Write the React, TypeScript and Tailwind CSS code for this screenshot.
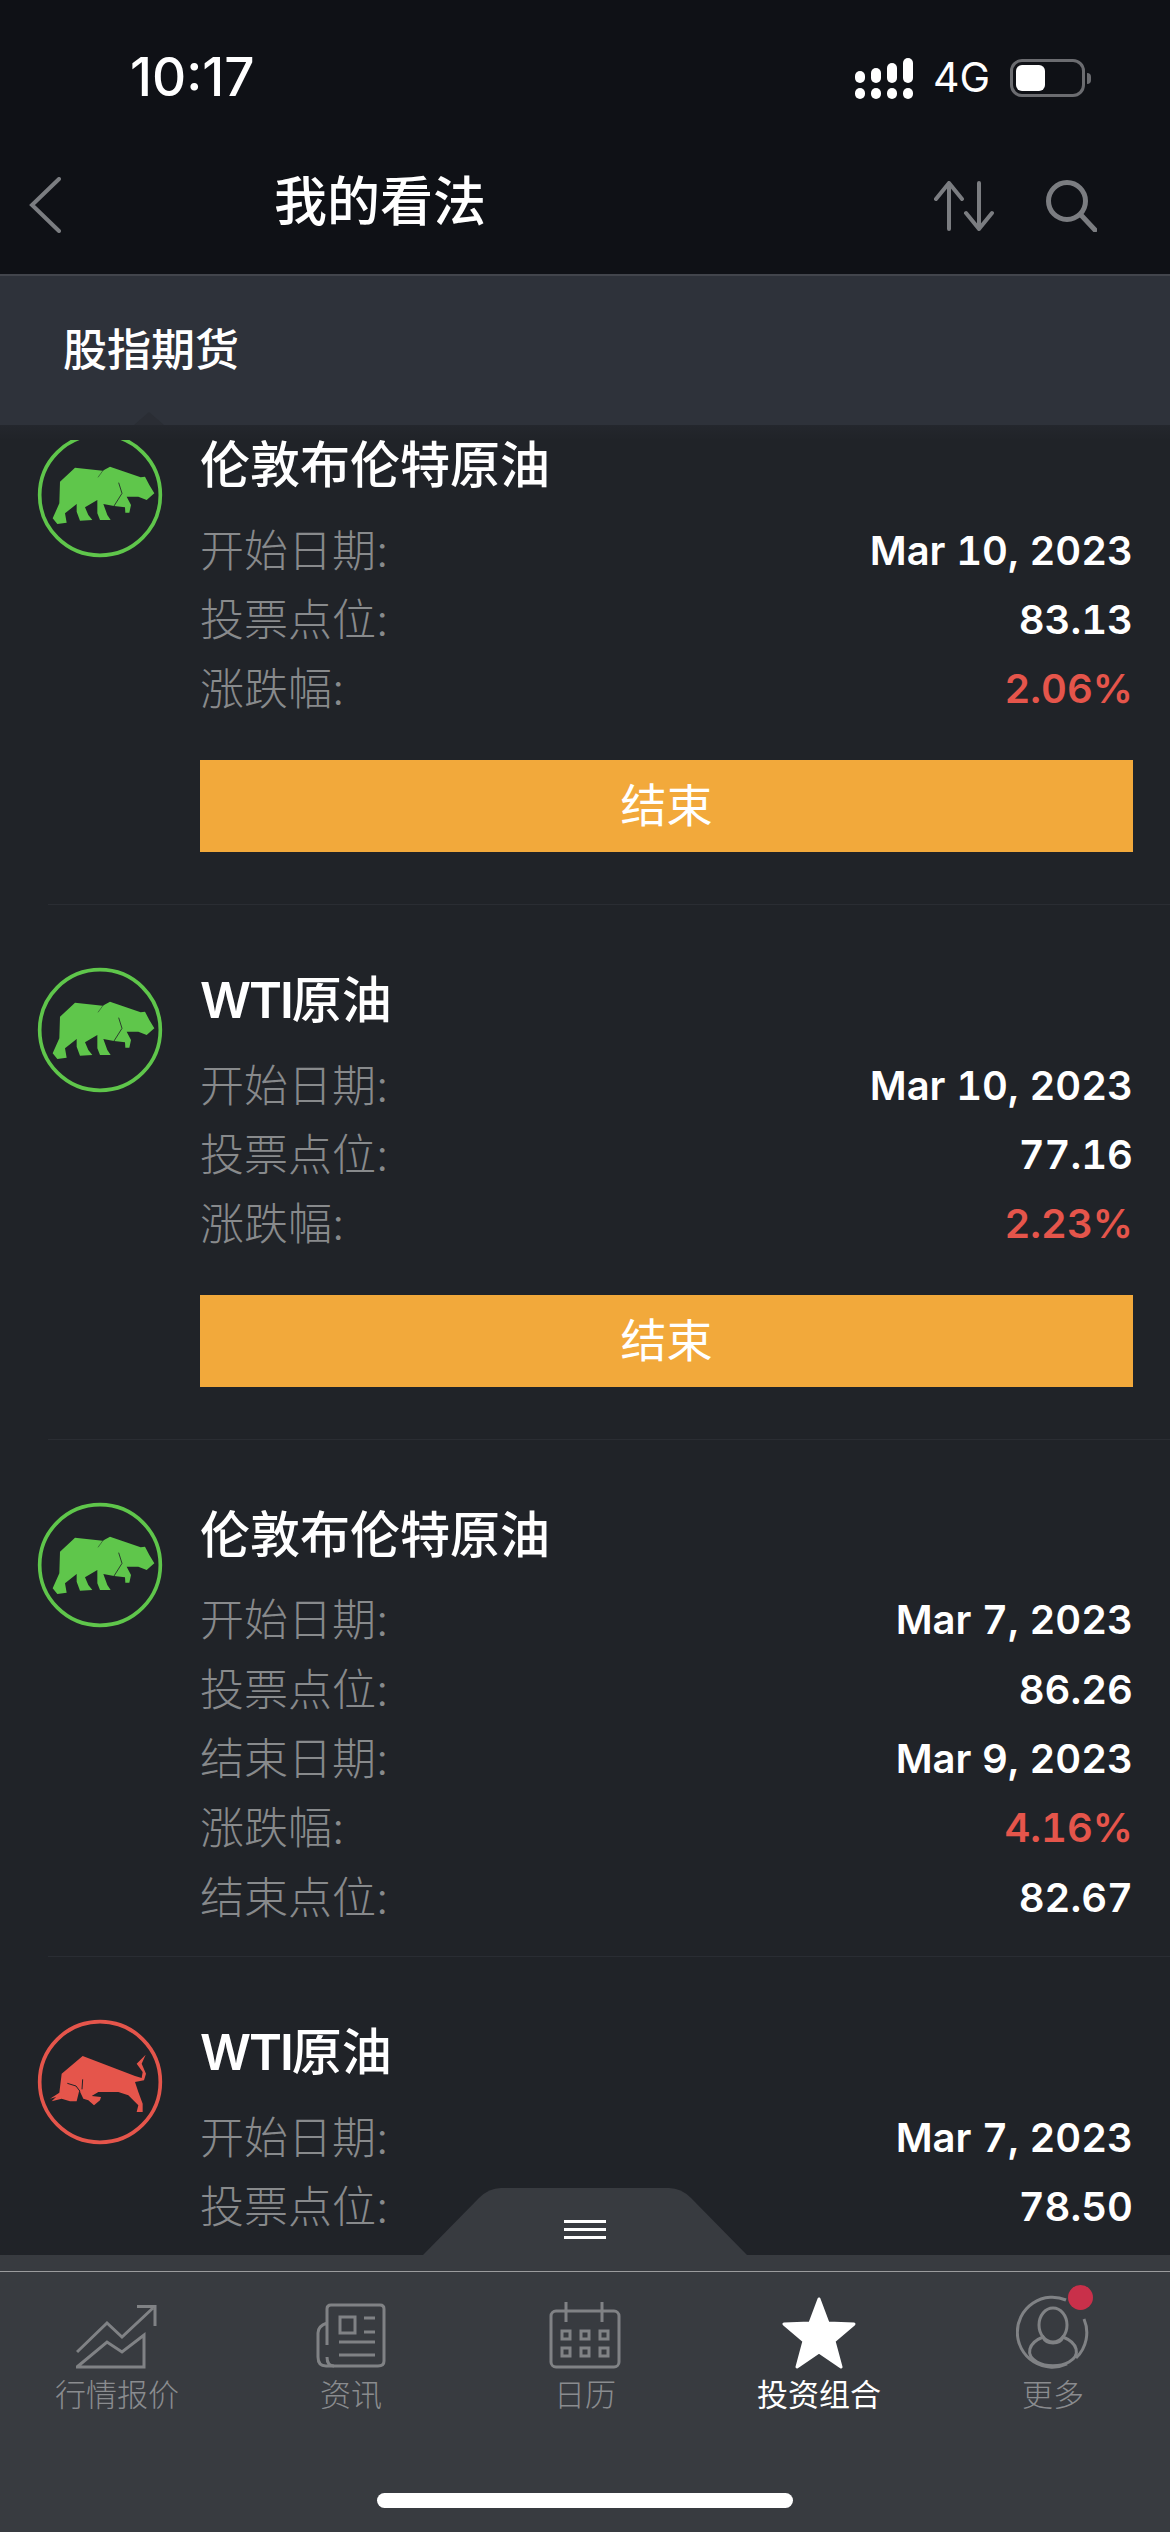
import React from "react";

function BearIcon() {
  return (
    <svg width="128" height="128" viewBox="48 43 384 384" className="shrink-0">
      <circle cx="240" cy="235" r="181" fill="none" stroke="#5fc64b" strokeWidth="11" />
      <path
        fill="#5fc64b"
        d="M120 195 L165 153 L248 162 L270 150 L362 182 L375 180 L388 205 L403 230 L380 250 L355 240 L320 240 L333 265 L328 288 L316 288 L315 272 L282 268 L250 262 L262 295 L272 310 L240 310 L232 290 L232 250 L195 272 L205 295 L217 310 L180 312 L170 285 L170 262 L135 290 L140 318 L112 322 L98 305 L118 260 Z"
      />
      <path fill="none" stroke="#202328" strokeWidth="2.5" d="M296 198 L306 230 L282 268" />
      <path fill="none" stroke="#202328" strokeWidth="1.5" d="M234 182 L250 160" />
    </svg>
  );
}

function BullIcon() {
  return (
    <svg width="128" height="128" viewBox="48 48 384 384" className="shrink-0">
      <circle cx="240" cy="240" r="181" fill="none" stroke="#e5554b" strokeWidth="11" />
      <path
        fill="#e5554b"
        d="M90 290 L118 272 L125 215 L188 162 L345 222 L365 228 L368 210 L350 185 L377 158 L365 185 L378 215 L372 235 L345 240 L355 270 L368 305 L368 330 L350 330 L355 310 L325 280 L295 270 L235 270 L215 282 L243 285 L240 295 L222 310 L205 295 L190 290 L178 265 L170 298 L150 298 L125 290 L95 298 L108 285 Z"
      />
      <path fill="none" stroke="#202328" strokeWidth="3" d="M142 244 L168 252 L180 268 M188 232 L186 262" />
    </svg>
  );
}

function Row({ label, value, red }: { label: string; value: string; red?: boolean }) {
  return (
    <div className="flex h-[69.3px] items-center justify-between">
      <span className="text-[44px] font-light text-[#888a8c]">{label}</span>
      <span className={`text-[40px] font-semibold tabular-nums ${red ? "text-[#e5554b]" : "text-white"}`}>{value}</span>
    </div>
  );
}

type Item = {
  title: string;
  wti?: boolean;
  bull?: boolean;
  rows: { label: string; value: string; red?: boolean }[];
  button?: boolean;
  cls?: string;
};

const items: Item[] = [
  {
    title: "伦敦布伦特原油",
    button: true,
    cls: "-mt-[70px]",
    rows: [
      { label: "开始日期:", value: "Mar 10, 2023" },
      { label: "投票点位:", value: "83.13" },
      { label: "涨跌幅:", value: "2.06%", red: true },
    ],
  },
  {
    title: "原油",
    wti: true,
    button: true,
    rows: [
      { label: "开始日期:", value: "Mar 10, 2023" },
      { label: "投票点位:", value: "77.16" },
      { label: "涨跌幅:", value: "2.23%", red: true },
    ],
  },
  {
    title: "伦敦布伦特原油",
    rows: [
      { label: "开始日期:", value: "Mar 7, 2023" },
      { label: "投票点位:", value: "86.26" },
      { label: "结束日期:", value: "Mar 9, 2023" },
      { label: "涨跌幅:", value: "4.16%", red: true },
      { label: "结束点位:", value: "82.67" },
    ],
  },
  {
    title: "原油",
    wti: true,
    bull: true,
    rows: [
      { label: "开始日期:", value: "Mar 7, 2023" },
      { label: "投票点位:", value: "78.50" },
    ],
  },
];

function ListItem({ item }: { item: Item }) {
  return (
    <div className={`ml-[48px] border-b border-[#2a2d33] ${item.cls ?? ""}`}>
      <div className={`-ml-[12px] flex gap-[36px] pr-[37px] pt-[60px] ${item.button ? "pb-[52px]" : "pb-[24px]"}`}>
        <div className="pt-[1px]">{item.bull ? <BullIcon /> : <BearIcon />}</div>
        <div className="min-w-0 flex-1">
          <div className="mb-[16px] h-[70px] text-[50px] font-medium leading-[70px] text-white">
            {item.wti && <span className="font-semibold tracking-[-2px]">WTI</span>}
            {item.title}
          </div>
          {item.rows.map((r) => (
            <Row key={r.label} {...r} />
          ))}
          {item.button && (
            <div className="mt-[36px] flex h-[92px] items-center justify-center bg-[#f2a93b] text-[46px] text-white">结束</div>
          )}
        </div>
      </div>
    </div>
  );
}

function Signal() {
  const tops = ["h-[12px]", "h-[15px]", "h-[20px]", "h-[25px]"];
  return (
    <div className="flex gap-[6px]">
      {tops.map((h) => (
        <div key={h} className="flex h-[41px] w-[10px] flex-col justify-end gap-[5px]">
          <div className={`${h} rounded-full bg-white`} />
          <div className="h-[11px] rounded-full bg-white" />
        </div>
      ))}
    </div>
  );
}

function Battery() {
  return (
    <div className="flex items-center gap-[2px]">
      <div className="h-[38px] w-[75px] rounded-[12px] border-[3px] border-[#6b6c70] p-[3px]">
        <div className="h-full w-[29px] rounded-[6px] bg-white" />
      </div>
      <div className="h-[11px] w-[4px] rounded-r-full bg-[#6b6c70]" />
    </div>
  );
}

function TabLabel({ children, active }: { children: React.ReactNode; active?: boolean }) {
  return (
    <span className={`mt-[8px] text-[31px] leading-[36px] ${active ? "font-normal text-white" : "font-light text-[#8a8c8f]"}`}>{children}</span>
  );
}

const stroke = { fill: "none", stroke: "#808285", strokeWidth: 3 };

function Tabs() {
  return (
    <div className="grid h-[260px] grid-cols-5 pt-[20px]">
      <div className="flex flex-col items-center">
        <div className="flex h-[77px] items-end">
          <svg width="82" height="64" viewBox="-1 -1 82 64" {...stroke}>
            <path d="M0 46 L30 17 L45 31 L76 2 M60 0.5 H78 V20" />
            <path d="M0 61 L30 36 L45 46 L67 29 V61 Z" />
          </svg>
        </div>
        <TabLabel>行情报价</TabLabel>
      </div>
      <div className="flex flex-col items-center">
        <div className="flex h-[77px] items-end">
          <svg width="70" height="66" viewBox="0 0 70 66" {...stroke}>
            <path d="M11 42 V6 Q11 2 15 2 H64 Q68 2 68 6 V58 Q68 63 62 63 H10 Q2 63 2 54 V30 Q2 23 11 20" />
            <path d="M11 54 Q11 63 18 63" />
            <rect x="24" y="14" width="15" height="16" />
            <path d="M48 15 H59 M48 29 H59 M23 39 H59 M23 52 H59" />
          </svg>
        </div>
        <TabLabel>资讯</TabLabel>
      </div>
      <div className="flex flex-col items-center">
        <div className="flex h-[77px] items-end">
          <svg width="72" height="68" viewBox="0 0 72 68" {...stroke}>
            <rect x="2" y="10" width="68" height="56" rx="5" />
            <path d="M17 1 V21 M53 1 V21" />
            <rect x="13" y="30" width="8" height="8" />
            <rect x="32" y="30" width="8" height="8" />
            <rect x="51" y="30" width="8" height="8" />
            <rect x="13" y="47" width="8" height="8" />
            <rect x="32" y="47" width="8" height="8" />
            <rect x="51" y="47" width="8" height="8" />
          </svg>
        </div>
        <TabLabel>日历</TabLabel>
      </div>
      <div className="flex flex-col items-center">
        <div className="flex h-[77px] items-end">
          <svg width="74" height="72" viewBox="0 0 74 72">
            <path
              fill="white"
              stroke="white"
              strokeWidth="3"
              strokeLinejoin="round"
              d="M37 2 L46 26 L72 27 L52 44 L59 70 L37 55 L15 70 L22 44 L2 27 L28 26 Z"
            />
          </svg>
        </div>
        <TabLabel active>投资组合</TabLabel>
      </div>
      <div className="relative flex flex-col items-center">
        <div className="flex h-[77px] items-end">
          <svg width="74" height="74" viewBox="0 0 74 74" {...stroke}>
            <path d="M50 5 A35 35 0 1 0 51 69 M68 24 A35 35 0 0 1 60 63" />
            <ellipse cx="37" cy="30" rx="14" ry="17" />
            <path d="M27 42 C12 48 9 60 21 67 C30 72 44 72 53 67 C65 60 62 48 47 42 C44 50 30 50 27 42 Z" />
          </svg>
          <div className="absolute left-[calc(50%+15px)] top-[-7px] h-[25px] w-[25px] rounded-full bg-[#c9304a]" />
        </div>
        <TabLabel>更多</TabLabel>
      </div>
    </div>
  );
}

export default function App() {
  return (
    <div className="flex h-[2532px] w-[1170px] flex-col overflow-hidden bg-[#202328] font-[Inter,'Noto_Sans_CJK_SC',sans-serif]">
      <header className="h-[274px] shrink-0 bg-[#0f1116]">
        <div className="flex h-[156px] items-center justify-between pl-[130px] pr-[79px]">
          <span className="text-[53px] font-medium text-white">10:17</span>
          <div className="flex items-center">
            <div className="ml-[1px]">
              <Signal />
            </div>
            <span className="ml-[20px] mr-[20px] text-[41px] text-white">4G</span>
            <Battery />
          </div>
        </div>
        <div className="flex h-[92px] items-center justify-between pl-[29px] pr-[73px]">
          <div className="flex items-center">
            <svg className="mt-[6px]" width="32" height="56" viewBox="0 0 32 56" fill="none" stroke="#7b7d81" strokeWidth="4" strokeLinecap="round">
              <path d="M30 2 L3 28 L30 54" />
            </svg>
            <span className="ml-[213px] mt-[2px] text-[53px] font-medium text-white">我的看法</span>
          </div>
          <div className="mt-[8px] flex items-center gap-[52px]">
            <svg width="60" height="50" viewBox="0 0 60 50" fill="none" stroke="#7b7d81" strokeWidth="4" strokeLinecap="round" strokeLinejoin="round">
              <path d="M15 48 V2 M2 18 L15 2 L28 18" />
              <path d="M45 2 V48 M32 32 L45 48 L58 32" />
            </svg>
            <svg width="51" height="52" viewBox="0 0 51 52" fill="none" stroke="#7b7d81" strokeWidth="5" strokeLinecap="round">
              <circle cx="21" cy="21" r="18.5" />
              <path d="M35 35 L49 50" />
            </svg>
          </div>
        </div>
      </header>

      <div className="relative flex h-[151px] shrink-0 items-center border-t-2 border-[#42454c] bg-[#2e323a] pl-[63px]">
        <span className="mt-[-2px] text-[44px] font-medium text-white">股指期货</span>
        <svg className="absolute bottom-0 left-[134px]" width="30" height="13" viewBox="0 0 30 13">
          <path d="M0 13 L15 0 L30 13 Z" fill="#2a2d34" />
        </svg>
      </div>

      <div className="h-[15px] shrink-0 bg-gradient-to-b from-[#24272d] to-[#202328]" />

      <main className="min-h-0 flex-1 overflow-hidden">
        {items.map((it, i) => (
          <ListItem key={i} item={it} />
        ))}
      </main>

      <footer className="relative shrink-0 bg-[#383b40]">
        <svg className="absolute bottom-full left-[423px]" width="324" height="67" viewBox="0 0 324 67">
          <path d="M0 67 L56 10 Q66 0 78 0 H246 Q258 0 268 10 L324 67 Z" fill="#383b40" />
        </svg>
        <div className="absolute bottom-[calc(100%+16px)] left-[564px] flex w-[42px] flex-col gap-[5px]">
          <div className="h-[3px] bg-white" />
          <div className="h-[3px] bg-white" />
          <div className="h-[3px] bg-white" />
        </div>
        <div className="h-[16px]" />
        <div className="h-[1px] bg-[#9b9c9e]" />
        <Tabs />
        <div className="absolute bottom-[24px] left-[377px] h-[15px] w-[416px] rounded-full bg-white" />
      </footer>
    </div>
  );
}
